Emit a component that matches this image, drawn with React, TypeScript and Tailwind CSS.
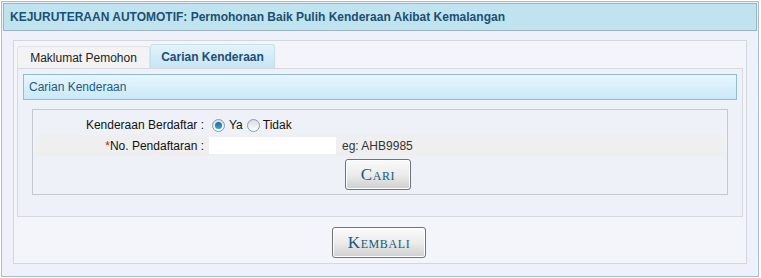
import { useState } from 'react'

const sans = { fontFamily: '"Liberation Sans", Arial, sans-serif' }

function Btn({ label, className = '' }: { label: string; className?: string }) {
  return (
    <button
      className={`rounded-[3px] border border-[#6f7478] bg-gradient-to-b from-[#fbfbfb] via-[#ececec] to-[#cfcfcf] text-[#175b7d] shadow-[inset_0_0_0_1px_#ffffff] ${className}`}
      style={{ fontFamily: '"Liberation Serif", "Times New Roman", serif', fontVariant: 'small-caps', letterSpacing: '0.6px' }}
    >
      {label}
    </button>
  )
}

function Radio({ checked, onClick }: { checked: boolean; onClick: () => void }) {
  return (
    <span
      onClick={onClick}
      className="inline-flex h-[13px] w-[13px] items-center justify-center rounded-full border border-[#8c9aa8] bg-gradient-to-b from-[#d8dde2] to-[#ffffff]"
    >
      {checked && <span className="h-[7px] w-[7px] rounded-full bg-gradient-to-b from-[#1d6b9c] to-[#3da0d6]" />}
    </span>
  )
}

export default function App() {
  const [daftar, setDaftar] = useState(true)
  const [noDaftar, setNoDaftar] = useState('')

  return (
    <div className="h-[278px] w-[761px] bg-white pt-px pl-px text-[12px]" style={sans}>
      <div className="h-[276px] w-[758px] border border-[#a3bdd3] bg-[#eef1f9] p-[1px]">
        <div className="flex h-[28px] items-center border border-[#9db4c6] bg-[#c0e4ef] pl-[6px] font-bold text-[#1d4f74]">
          KEJURUTERAAN AUTOMOTIF: Permohonan Baik Pulih Kenderaan Akibat Kemalangan
        </div>

        <div className="mx-[10px] mt-[9px] h-[224px] border border-[#d3d7de] bg-[#f4f5fa] px-[3px] pt-[3px]">
          <div className="flex h-[24px] items-end">
            <div className="flex h-[22px] w-[133px] items-center justify-center rounded-t-[3px] border border-b-0 border-[#e0e2e6] bg-[#f3f3f3] text-[#222]">
              Maklumat Pemohon
            </div>
            <div className="flex h-[24px] w-[125px] items-center justify-center rounded-t-[3px] border border-b-0 border-[#c9dfeb] bg-gradient-to-b from-[#e3f3fb] to-[#c6e5f4] font-bold text-[#1d4f74]">
              Carian Kenderaan
            </div>
          </div>

          <div className="h-[149px] border border-[#d6dae0] bg-[#eff1f8] px-[5px] pt-[5px]">
            <div className="flex h-[26px] items-center border border-[#8fbcd8] bg-gradient-to-b from-[#e8f6fd] to-[#c9e8f8] pl-[5px] text-[#1d5a86]">
              Carian Kenderaan
            </div>

            <div className="mx-[9px] mt-[9px] h-[86px] border border-[#c5c9cf] px-[3px] pt-[5px] text-[#111]">
              <div className="flex h-[20px] items-center">
                <div className="w-[171px] pr-[3px] text-right">Kenderaan Berdaftar :</div>
                <div className="flex items-center pl-[5px]">
                  <Radio checked={daftar} onClick={() => setDaftar(true)} />
                  <span className="ml-[4px] mr-[4px]">Ya</span>
                  <Radio checked={!daftar} onClick={() => setDaftar(false)} />
                  <span className="ml-[3px]">Tidak</span>
                </div>
              </div>
              <div className="flex h-[21px] items-center bg-[#efefef]">
                <div className="w-[171px] pr-[3px] text-right">
                  <span className="text-[#d11]">*</span>No. Pendaftaran :
                </div>
                <input
                  value={noDaftar}
                  onChange={(e) => setNoDaftar(e.target.value)}
                  className="ml-[1px] h-[19px] w-[129px] border border-[#f0f0f0] bg-white px-1 outline-none"
                />
                <span className="ml-[5px] text-[#333]">eg: AHB9985</span>
              </div>
              <div className="mt-[3px] flex pl-[309px]">
                <Btn label="Cari" className="h-[31px] w-[66px] text-[17px]" />
              </div>
            </div>
          </div>

          <div className="mt-[10px] flex justify-center pr-[2px]">
            <Btn label="Kembali" className="h-[31px] w-[94px] text-[17px]" />
          </div>
        </div>
      </div>
    </div>
  )
}
